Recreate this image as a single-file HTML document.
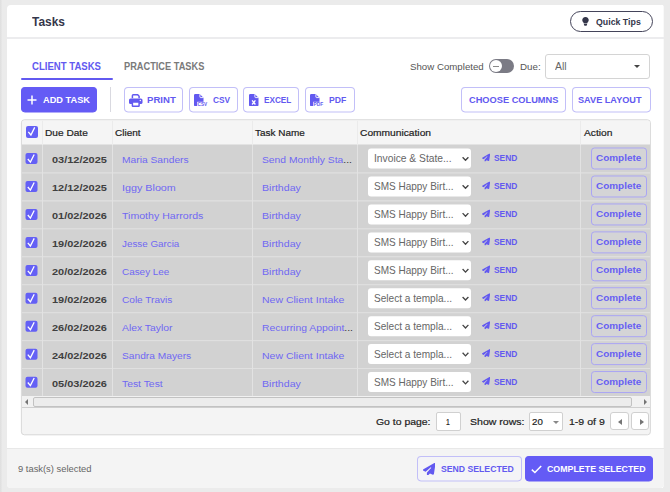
<!DOCTYPE html>
<html>
<head>
<meta charset="utf-8">
<title>Tasks</title>
<style>
*{box-sizing:border-box;margin:0;padding:0}
html,body{width:670px;height:492px;overflow:hidden}
body{background:#ebebeb;font-family:"Liberation Sans",sans-serif;position:relative;color:#333}
.abs{position:absolute;white-space:nowrap}
#edge{left:0;top:0;width:2px;height:492px;background:linear-gradient(90deg,#dedede,#e8e8e8)}
#card{left:7px;top:5px;width:656px;height:483px;background:#fff;border-radius:4px 0 0 4px}
#cardr{left:661px;top:0;transform:translate(.7px,4.800px);width:2px;height:482.800px;background:#fff;border-radius:0 3.500px 3.500px 0}
#hdrline{left:7px;top:37px;width:657px;height:2px;background:#ececee}
#title{left:32px;top:14px;font-size:12.5px;font-weight:bold;color:#34364a;line-height:16px;}
#qt{left:570px;top:11px;width:83px;height:21px;border:1px solid #44445a;border-radius:11px}
#qtt{left:595.5px;top:15px;font-size:9.8px;font-weight:bold;color:#34364a;line-height:13px;}
.tab{font-size:10.3px;font-weight:bold;line-height:12px;top:61px}
#tab1{left:32px;color:#6259f0;}
#tab2{left:124px;color:#7a7a7a;}
#tabline{left:21px;top:78px;width:91.500px;height:2px;background:#6259f0;border-radius:1px}
#showc{left:410px;top:61px;font-size:9.5px;color:#555;line-height:12px}
#toggle{left:488.500px;top:59px;width:25.500px;height:14px;border-radius:7px;background:#7b7b85}
#toggle i{position:absolute;left:1px;top:1px;width:12px;height:12px;border-radius:50%;background:#fff}
#toggle b{position:absolute;left:4px;top:6.500px;width:6px;height:1px;background:#8a8a8a}
#due{left:520px;top:61px;font-size:9.5px;color:#555;line-height:12px}
#sel{left:545px;top:54px;width:105px;height:25px;border:1px solid #d4d4d4;border-radius:3px;background:#fff}
#selt{left:555px;top:60px;font-size:10.6px;color:#666;line-height:12px}
#selc{left:634px;top:65px;width:0;height:0;border:3.5px solid transparent;border-top:3.5px solid #444;border-bottom:0}
.btn{height:25px;transform:scaleY(1.016);transform-origin:0 0;border:1px solid #c2bff8;border-radius:4px;background:#fff}
.btn.pri{background:#645bf5;border-color:#645bf5}
.bt{font-size:9.8px;font-weight:bold;color:#6259f0;line-height:12px;top:94px;}
.bt.w{color:#fff}
#vsep{left:110px;top:87px;width:1px;height:25px;background:#d9d9e0}

#grid{left:0;top:0;transform:translate(20.900px,119.300px);width:630px;height:315.900px;border:1.500px solid #d8d8d8;border-radius:3.500px;background:#f4f4f4}
#ghead{left:22px;top:0;transform:translateY(120.400px);width:627.600px;height:24.400px;background:#f5f5f5;border-radius:2px 2px 0 0}
.th{top:127.300px;font-size:9.7px;line-height:12px;color:#222;-webkit-text-stroke:.2px #222}
.rw{left:0;top:0;width:670px;height:27.930px}
.row{left:22px;top:0;width:627.600px;height:28px;background:#d2d2d2}
.rl{left:22px;top:-.4px;width:627.600px;height:1px;background:#e0e0e0}
.cb{width:12px;height:12px;background:#6460f5;border-radius:2px}
.cb.r{left:0;top:0;width:11.800px;height:11.300px}
.cb svg{position:absolute;left:0;top:0}
.vl{top:0;transform:translateY(120.800px);width:1px;height:275.200px;background:linear-gradient(#ebebeb 0,#ebebeb 23.800px,#e2e2e2 23.800px,#e2e2e2 100%)}
.td{top:0;font-size:9.6px;line-height:28px;margin-top:1.900px}
.lnk{color:#7068f2}
.lnk i{color:#333;font-style:normal}
.dt{color:#404040;font-weight:bold;font-size:9.7px;margin-top:2.200px}
.dd{left:368px;top:3.800px;width:103.200px;height:20.600px;background:#fff;border-radius:3px}
.ddt{top:5px;font-size:10.2px;line-height:20.500px;color:#666}
.send{top:-.45px;left:494px;font-size:8.800px;font-weight:bold;color:#6259f0;line-height:28px}
.cmp{left:591.300px;top:2.700px;width:55.400px;height:22.500px;border:1px solid #aaa5f4;border-radius:3.500px;background:#d4d4d6}
.cmpt{top:3.200px;font-size:9.4px;font-weight:bold;color:#675ff3;line-height:22px}
#hsb{left:22px;top:396px;width:627.600px;height:11px;background:#f1f1f1}
#hst{left:33px;top:397px;width:599px;height:10px;background:#ececec;border:1px solid #c2c2c2;border-radius:2px}
#pgline{left:22px;top:407px;width:627.600px;height:1px;background:#cfcfcf}
.pg{font-size:9.8px;line-height:12px;color:#222;top:416px;-webkit-text-stroke:.2px #222}
.pin{top:412px;height:19px;border:1px solid #d0d0d0;border-radius:2px;background:#fff}
#foot{left:7px;top:448px;width:657px;height:40px;background:#f4f4f4;border-radius:0 0 4px 4px;border-top:1px solid #e8e8e8}
#nsel{left:17.3px;top:462.5px;font-size:9.3px;color:#666;line-height:12px}
.pb{top:412px;height:18px;border:1px solid #d0d0d0;border-radius:3px;background:#fff}
</style>
</head>
<body>
<div id="edge" class="abs"></div>
<div id="card" class="abs"></div>
<div id="cardr" class="abs"></div>
<div id="hdrline" class="abs"></div>
<div id="title" class="abs" style="left:32.2px;transform:scaleX(0.954);transform-origin:0 50%;">Tasks</div>
<div id="qt" class="abs"></div>
<svg class="abs" style="left:582.400px;top:17.100px" width="7" height="8.8" viewBox="0 0 8 10"><path d="M4 0 C1.6 0 0.3 1.7 0.3 3.5 C0.3 4.8 1 5.5 1.6 6.2 C1.9 6.6 2 6.9 2 7.3 H6 C6 6.9 6.1 6.6 6.4 6.2 C7 5.5 7.7 4.8 7.7 3.5 C7.7 1.7 6.4 0 4 0 Z M2.2 7.9 H5.8 V8.6 C5.8 9.4 5.2 10 4 10 C2.8 10 2.2 9.4 2.2 8.6 Z" fill="#34364a"/></svg>
<div id="qtt" class="abs" style="left:595.7px;transform:scaleX(0.897);transform-origin:0 50%;">Quick Tips</div>

<div id="tab1" class="abs tab" style="left:31.8px;transform:scaleX(0.930);transform-origin:0 50%;">CLIENT TASKS</div>
<div id="tab2" class="abs tab" style="left:123.8px;transform:scaleX(0.896);transform-origin:0 50%;">PRACTICE TASKS</div>
<div id="tabline" class="abs"></div>
<div id="showc" class="abs" style="left:410.0px;transform:scaleX(1.019);transform-origin:0 50%;">Show Completed</div>
<div id="toggle" class="abs"><i></i><b></b></div>
<div id="due" class="abs" style="left:520.0px;transform:scaleX(1.026);transform-origin:0 50%;">Due:</div>
<div id="sel" class="abs"></div>
<div id="selt" class="abs" style="left:554.6px;transform:scaleX(0.985);transform-origin:0 50%;">All</div>
<div id="selc" class="abs"></div>

<div class="abs btn pri" style="left:21px;top:87px;width:76px"></div>
<svg class="abs" style="left:27px;top:95px" width="10" height="10" viewBox="0 0 10 10"><path d="M5 0.5 V9.5 M0.5 5 H9.5" stroke="#fff" stroke-width="1.5" fill="none"/></svg>
<div id="b1" class="abs bt w" style="left:42.9px;transform:scaleX(0.941);transform-origin:0 50%;">ADD TASK</div>
<div id="vsep" class="abs"></div>
<div class="abs btn" style="left:124px;top:87px;width:59px"></div>
<svg class="abs" style="left:129px;top:93.500px" width="13.5" height="13" viewBox="0 0 13.5 13"><path d="M3.4 4.3 V1.7 A0.9 0.9 0 0 1 4.3 0.8 H8.7 L10.1 2.2 V4.3" fill="none" stroke="#6259f0" stroke-width="1.5"/><rect x="0" y="4.4" width="13.5" height="5.6" rx="1.6" fill="#6259f0"/><rect x="3.4" y="8.1" width="6.7" height="4.1" rx="0.5" fill="#fff" stroke="#6259f0" stroke-width="1.5"/><circle cx="11.3" cy="6.5" r="0.7" fill="#fff"/></svg>
<div id="b2" class="abs bt" style="left:147.3px;transform:scaleX(0.978);transform-origin:0 50%;">PRINT</div>
<div class="abs btn" style="left:189px;top:87px;width:49px"></div>
<svg class="abs" style="left:194.400px;top:93.700px" width="14" height="12.5" viewBox="0 0 14 12.5"><path d="M1.3 0 H5.7 L9.5 3.8 V11 A1.3 1.3 0 0 1 8.2 12.3 H1.3 A1.3 1.3 0 0 1 0 11 V1.3 A1.3 1.3 0 0 1 1.3 0 Z" fill="#6259f0"/><path d="M5.9 0.2 V2.9 A0.7 0.7 0 0 0 6.6 3.6 H9.3" fill="none" stroke="#fff" stroke-width="0.9"/><rect x="3.2" y="7.8" width="11" height="5" fill="#fff"/><text x="3.6" y="12.2" font-family="Liberation Sans, sans-serif" font-weight="bold" font-size="5.4" fill="#6259f0" textLength="9.6" lengthAdjust="spacingAndGlyphs">CSV</text></svg>
<div id="b3" class="abs bt" style="left:213.0px;transform:scaleX(0.848);transform-origin:0 50%;">CSV</div>
<div class="abs btn" style="left:243px;top:87px;width:56px"></div>
<svg class="abs" style="left:249px;top:93.800px" width="9.5" height="12.3" viewBox="0 0 9.5 12.3"><path d="M1.3 0 H5.7 L9.5 3.8 V11 A1.3 1.3 0 0 1 8.2 12.3 H1.3 A1.3 1.3 0 0 1 0 11 V1.3 A1.3 1.3 0 0 1 1.3 0 Z" fill="#6259f0"/><path d="M5.9 0.2 V2.9 A0.7 0.7 0 0 0 6.6 3.6 H9.3" fill="none" stroke="#fff" stroke-width="0.9"/><path d="M3.1 6.3 L6.4 10.5 M6.4 6.3 L3.1 10.5" stroke="#fff" stroke-width="1.3" fill="none"/></svg>
<div id="b4" class="abs bt" style="left:264.1px;transform:scaleX(0.834);transform-origin:0 50%;">EXCEL</div>
<div class="abs btn" style="left:305px;top:87px;width:50px"></div>
<svg class="abs" style="left:310.200px;top:93.800px" width="14" height="12.5" viewBox="0 0 14 12.5"><path d="M1.3 0 H5.7 L9.5 3.8 V11 A1.3 1.3 0 0 1 8.2 12.3 H1.3 A1.3 1.3 0 0 1 0 11 V1.3 A1.3 1.3 0 0 1 1.3 0 Z" fill="#6259f0"/><path d="M5.9 0.2 V2.9 A0.7 0.7 0 0 0 6.6 3.6 H9.3" fill="none" stroke="#fff" stroke-width="0.9"/><rect x="3.2" y="7.8" width="11" height="5" fill="#fff"/><text x="3.6" y="12.1" font-family="Liberation Sans, sans-serif" font-weight="bold" font-size="5.2" fill="#6259f0" textLength="9.6" lengthAdjust="spacingAndGlyphs">PDF</text></svg>
<div id="b5" class="abs bt" style="left:329.4px;transform:scaleX(0.881);transform-origin:0 50%;">PDF</div>
<div class="abs btn" style="left:461px;top:87px;width:105px"></div>
<div id="b6" class="abs bt" style="left:469.2px;transform:scaleX(0.944);transform-origin:0 50%;">CHOOSE COLUMNS</div>
<div class="abs btn" style="left:572px;top:87px;width:79px"></div>
<div id="b7" class="abs bt" style="left:578.3px;transform:scaleX(0.934);transform-origin:0 50%;">SAVE LAYOUT</div>

<div id="grid" class="abs"></div>
<div id="ghead" class="abs"></div>
<span class="cb abs" style="left:26px;top:126px"><svg width="12" height="12" viewBox="0 0 12 12"><path d="M2.3 5.9 L4.9 9 L8.7 1.4" fill="none" stroke="#fff" stroke-width="1.3"/></svg></span>
<div id="h1" class="abs th" style="left:44.9px;transform:scaleX(1.045);transform-origin:0 50%;">Due Date</div>
<div id="h2" class="abs th" style="left:115.3px;transform:scaleX(1.030);transform-origin:0 50%;">Client</div>
<div id="h3" class="abs th" style="left:255.3px;transform:scaleX(1.027);transform-origin:0 50%;">Task Name</div>
<div id="h4" class="abs th" style="left:359.6px;transform:scaleX(1.055);transform-origin:0 50%;">Communication</div>
<div id="h5" class="abs th" style="left:583.5px;transform:scaleX(1.055);transform-origin:0 50%;">Action</div>
<div class="abs rw" style="transform:translateY(144.49px)">
<div class="abs row"></div>
<span class="cb r abs" style="transform:translate(25.500px,8.600px)"><svg width="12" height="12" viewBox="0 0 12 12"><path d="M2.3 5.9 L4.9 9 L8.7 1.4" fill="none" stroke="#fff" stroke-width="1.3"/></svg></span>
<div id="r0d" class="abs td dt" style="left:51.8px;transform:scaleX(1.132);transform-origin:0 50%;">03/12/2025</div>
<div id="r0c" class="abs td lnk" style="left:122.0px;transform:scaleX(1.068);transform-origin:0 50%;">Maria Sanders</div>
<div id="r0t" class="abs td lnk" style="left:262.0px;transform:scaleX(1.074);transform-origin:0 50%;">Send Monthly Sta<i>...</i></div>
<div class="abs dd"></div>
<div id="r0s" class="abs ddt" style="left:374.4px;transform:scaleX(1.007);transform-origin:0 50%;">Invoice &amp; State...</div>
<svg class="abs" style="left:461.800px;top:12px" width="7" height="5" viewBox="0 0 7 5"><path d="M0.6 0.7 L3.5 3.8 L6.4 0.7" fill="none" stroke="#444" stroke-width="1.3"/></svg>
<svg class="abs" style="left:482.1px;top:9.2px" width="8.2" height="8.2" viewBox="0 0 512 512"><path fill="#6259f0" d="M498.1 5.6c10.1 7 15.4 19.1 13.5 31.2l-64 416c-1.5 9.7-7.4 18.2-16 23s-18.9 5.4-28 1.6L284 427.7l-68.5 74.1c-8.9 9.7-22.9 12.9-35.2 8.1S160 493.2 160 480V396.4c0-4 1.5-7.8 4.2-10.7L331.8 202.8c5.8-6.3 5.6-16-.4-22s-15.7-6.4-22-.7L106 360.8 17.7 316.6C7.1 311.3 .3 300.7 0 288.900s5.9-22.8 16.1-28.700l448-256c10.7-6.1 23.9-5.5 34 1.400z"/></svg>
<div id="r0n" class="abs send" style="left:493.5px;transform:scaleX(0.956);transform-origin:0 50%;">SEND</div>
<div class="abs cmp"></div>
<div id="r0k" class="abs cmpt" style="left:596.2px;transform:scaleX(1.060);transform-origin:0 50%;">Complete</div>
</div>
<div class="abs rw" style="transform:translateY(172.49px)">
<div class="abs row"></div>
<span class="cb r abs" style="transform:translate(25.500px,8.600px)"><svg width="12" height="12" viewBox="0 0 12 12"><path d="M2.3 5.9 L4.9 9 L8.7 1.4" fill="none" stroke="#fff" stroke-width="1.3"/></svg></span>
<div id="r1d" class="abs td dt" style="left:51.8px;transform:scaleX(1.132);transform-origin:0 50%;">12/12/2025</div>
<div id="r1c" class="abs td lnk" style="left:122.0px;transform:scaleX(1.121);transform-origin:0 50%;">Iggy Bloom</div>
<div id="r1t" class="abs td lnk" style="left:262.0px;transform:scaleX(1.103);transform-origin:0 50%;">Birthday</div>
<div class="abs dd"></div>
<div id="r1s" class="abs ddt" style="left:374.4px;transform:scaleX(0.982);transform-origin:0 50%;">SMS Happy Birt...</div>
<svg class="abs" style="left:461.800px;top:12px" width="7" height="5" viewBox="0 0 7 5"><path d="M0.6 0.7 L3.5 3.8 L6.4 0.7" fill="none" stroke="#444" stroke-width="1.3"/></svg>
<svg class="abs" style="left:482.1px;top:9.2px" width="8.2" height="8.2" viewBox="0 0 512 512"><path fill="#6259f0" d="M498.1 5.6c10.1 7 15.4 19.1 13.5 31.2l-64 416c-1.5 9.7-7.4 18.2-16 23s-18.9 5.4-28 1.6L284 427.7l-68.5 74.1c-8.9 9.7-22.9 12.9-35.2 8.1S160 493.2 160 480V396.4c0-4 1.5-7.8 4.2-10.7L331.8 202.8c5.8-6.3 5.6-16-.4-22s-15.7-6.4-22-.7L106 360.8 17.7 316.6C7.1 311.3 .3 300.7 0 288.900s5.9-22.8 16.1-28.700l448-256c10.7-6.1 23.9-5.5 34 1.400z"/></svg>
<div id="r1n" class="abs send" style="left:493.5px;transform:scaleX(0.956);transform-origin:0 50%;">SEND</div>
<div class="abs cmp"></div>
<div id="r1k" class="abs cmpt" style="left:596.2px;transform:scaleX(1.060);transform-origin:0 50%;">Complete</div>
</div>
<div class="abs rw" style="transform:translateY(200.46px)">
<div class="abs row"></div>
<span class="cb r abs" style="transform:translate(25.500px,8.600px)"><svg width="12" height="12" viewBox="0 0 12 12"><path d="M2.3 5.9 L4.9 9 L8.7 1.4" fill="none" stroke="#fff" stroke-width="1.3"/></svg></span>
<div id="r2d" class="abs td dt" style="left:51.8px;transform:scaleX(1.132);transform-origin:0 50%;">01/02/2026</div>
<div id="r2c" class="abs td lnk" style="left:122.0px;transform:scaleX(1.103);transform-origin:0 50%;">Timothy Harrords</div>
<div id="r2t" class="abs td lnk" style="left:262.0px;transform:scaleX(1.103);transform-origin:0 50%;">Birthday</div>
<div class="abs dd"></div>
<div id="r2s" class="abs ddt" style="left:374.4px;transform:scaleX(0.982);transform-origin:0 50%;">SMS Happy Birt...</div>
<svg class="abs" style="left:461.800px;top:12px" width="7" height="5" viewBox="0 0 7 5"><path d="M0.6 0.7 L3.5 3.8 L6.4 0.7" fill="none" stroke="#444" stroke-width="1.3"/></svg>
<svg class="abs" style="left:482.1px;top:9.2px" width="8.2" height="8.2" viewBox="0 0 512 512"><path fill="#6259f0" d="M498.1 5.6c10.1 7 15.4 19.1 13.5 31.2l-64 416c-1.5 9.7-7.4 18.2-16 23s-18.9 5.4-28 1.6L284 427.7l-68.5 74.1c-8.9 9.7-22.9 12.9-35.2 8.1S160 493.2 160 480V396.4c0-4 1.5-7.8 4.2-10.7L331.8 202.8c5.8-6.3 5.6-16-.4-22s-15.7-6.4-22-.7L106 360.8 17.7 316.6C7.1 311.3 .3 300.7 0 288.900s5.9-22.8 16.1-28.700l448-256c10.7-6.1 23.9-5.5 34 1.400z"/></svg>
<div id="r2n" class="abs send" style="left:493.5px;transform:scaleX(0.956);transform-origin:0 50%;">SEND</div>
<div class="abs cmp"></div>
<div id="r2k" class="abs cmpt" style="left:596.2px;transform:scaleX(1.060);transform-origin:0 50%;">Complete</div>
</div>
<div class="abs rw" style="transform:translateY(228.39px)">
<div class="abs row"></div>
<span class="cb r abs" style="transform:translate(25.500px,8.600px)"><svg width="12" height="12" viewBox="0 0 12 12"><path d="M2.3 5.9 L4.9 9 L8.7 1.4" fill="none" stroke="#fff" stroke-width="1.3"/></svg></span>
<div id="r3d" class="abs td dt" style="left:51.8px;transform:scaleX(1.132);transform-origin:0 50%;">19/02/2026</div>
<div id="r3c" class="abs td lnk" style="left:122.0px;transform:scaleX(1.024);transform-origin:0 50%;">Jesse Garcia</div>
<div id="r3t" class="abs td lnk" style="left:262.0px;transform:scaleX(1.103);transform-origin:0 50%;">Birthday</div>
<div class="abs dd"></div>
<div id="r3s" class="abs ddt" style="left:374.4px;transform:scaleX(0.982);transform-origin:0 50%;">SMS Happy Birt...</div>
<svg class="abs" style="left:461.800px;top:12px" width="7" height="5" viewBox="0 0 7 5"><path d="M0.6 0.7 L3.5 3.8 L6.4 0.7" fill="none" stroke="#444" stroke-width="1.3"/></svg>
<svg class="abs" style="left:482.1px;top:9.2px" width="8.2" height="8.2" viewBox="0 0 512 512"><path fill="#6259f0" d="M498.1 5.6c10.1 7 15.4 19.1 13.5 31.2l-64 416c-1.5 9.7-7.4 18.2-16 23s-18.9 5.4-28 1.6L284 427.7l-68.5 74.1c-8.9 9.7-22.9 12.9-35.2 8.1S160 493.2 160 480V396.4c0-4 1.5-7.8 4.2-10.7L331.8 202.8c5.8-6.3 5.6-16-.4-22s-15.7-6.4-22-.7L106 360.8 17.7 316.6C7.1 311.3 .3 300.7 0 288.900s5.9-22.8 16.1-28.700l448-256c10.7-6.1 23.9-5.5 34 1.400z"/></svg>
<div id="r3n" class="abs send" style="left:493.5px;transform:scaleX(0.956);transform-origin:0 50%;">SEND</div>
<div class="abs cmp"></div>
<div id="r3k" class="abs cmpt" style="left:596.2px;transform:scaleX(1.060);transform-origin:0 50%;">Complete</div>
</div>
<div class="abs rw" style="transform:translateY(256.32px)">
<div class="abs row"></div>
<span class="cb r abs" style="transform:translate(25.500px,8.600px)"><svg width="12" height="12" viewBox="0 0 12 12"><path d="M2.3 5.9 L4.9 9 L8.7 1.4" fill="none" stroke="#fff" stroke-width="1.3"/></svg></span>
<div id="r4d" class="abs td dt" style="left:51.8px;transform:scaleX(1.132);transform-origin:0 50%;">20/02/2026</div>
<div id="r4c" class="abs td lnk" style="left:122.0px;transform:scaleX(1.033);transform-origin:0 50%;">Casey Lee</div>
<div id="r4t" class="abs td lnk" style="left:262.0px;transform:scaleX(1.103);transform-origin:0 50%;">Birthday</div>
<div class="abs dd"></div>
<div id="r4s" class="abs ddt" style="left:374.4px;transform:scaleX(0.982);transform-origin:0 50%;">SMS Happy Birt...</div>
<svg class="abs" style="left:461.800px;top:12px" width="7" height="5" viewBox="0 0 7 5"><path d="M0.6 0.7 L3.5 3.8 L6.4 0.7" fill="none" stroke="#444" stroke-width="1.3"/></svg>
<svg class="abs" style="left:482.1px;top:9.2px" width="8.2" height="8.2" viewBox="0 0 512 512"><path fill="#6259f0" d="M498.1 5.6c10.1 7 15.4 19.1 13.5 31.2l-64 416c-1.5 9.7-7.4 18.2-16 23s-18.9 5.4-28 1.6L284 427.7l-68.5 74.1c-8.9 9.7-22.9 12.9-35.2 8.1S160 493.2 160 480V396.4c0-4 1.5-7.8 4.2-10.7L331.8 202.8c5.8-6.3 5.6-16-.4-22s-15.7-6.4-22-.7L106 360.8 17.7 316.6C7.1 311.3 .3 300.7 0 288.900s5.9-22.8 16.1-28.700l448-256c10.7-6.1 23.9-5.5 34 1.400z"/></svg>
<div id="r4n" class="abs send" style="left:493.5px;transform:scaleX(0.956);transform-origin:0 50%;">SEND</div>
<div class="abs cmp"></div>
<div id="r4k" class="abs cmpt" style="left:596.2px;transform:scaleX(1.060);transform-origin:0 50%;">Complete</div>
</div>
<div class="abs rw" style="transform:translateY(284.25px)">
<div class="abs row"></div>
<span class="cb r abs" style="transform:translate(25.500px,8.600px)"><svg width="12" height="12" viewBox="0 0 12 12"><path d="M2.3 5.9 L4.9 9 L8.7 1.4" fill="none" stroke="#fff" stroke-width="1.3"/></svg></span>
<div id="r5d" class="abs td dt" style="left:51.8px;transform:scaleX(1.132);transform-origin:0 50%;">19/02/2026</div>
<div id="r5c" class="abs td lnk" style="left:122.0px;transform:scaleX(1.050);transform-origin:0 50%;">Cole Travis</div>
<div id="r5t" class="abs td lnk" style="left:262.0px;transform:scaleX(1.095);transform-origin:0 50%;">New Client Intake</div>
<div class="abs dd"></div>
<div id="r5s" class="abs ddt" style="left:374.4px;transform:scaleX(0.991);transform-origin:0 50%;">Select a templa...</div>
<svg class="abs" style="left:461.800px;top:12px" width="7" height="5" viewBox="0 0 7 5"><path d="M0.6 0.7 L3.5 3.8 L6.4 0.7" fill="none" stroke="#444" stroke-width="1.3"/></svg>
<svg class="abs" style="left:482.1px;top:9.2px" width="8.2" height="8.2" viewBox="0 0 512 512"><path fill="#6259f0" d="M498.1 5.6c10.1 7 15.4 19.1 13.5 31.2l-64 416c-1.5 9.7-7.4 18.2-16 23s-18.9 5.4-28 1.6L284 427.7l-68.5 74.1c-8.9 9.7-22.9 12.9-35.2 8.1S160 493.2 160 480V396.4c0-4 1.5-7.8 4.2-10.7L331.8 202.8c5.8-6.3 5.6-16-.4-22s-15.7-6.4-22-.7L106 360.8 17.7 316.6C7.1 311.3 .3 300.7 0 288.900s5.9-22.8 16.1-28.700l448-256c10.7-6.1 23.9-5.5 34 1.400z"/></svg>
<div id="r5n" class="abs send" style="left:493.5px;transform:scaleX(0.956);transform-origin:0 50%;">SEND</div>
<div class="abs cmp"></div>
<div id="r5k" class="abs cmpt" style="left:596.2px;transform:scaleX(1.060);transform-origin:0 50%;">Complete</div>
</div>
<div class="abs rw" style="transform:translateY(312.18px)">
<div class="abs row"></div>
<span class="cb r abs" style="transform:translate(25.500px,8.600px)"><svg width="12" height="12" viewBox="0 0 12 12"><path d="M2.3 5.9 L4.9 9 L8.7 1.4" fill="none" stroke="#fff" stroke-width="1.3"/></svg></span>
<div id="r6d" class="abs td dt" style="left:51.8px;transform:scaleX(1.132);transform-origin:0 50%;">26/02/2026</div>
<div id="r6c" class="abs td lnk" style="left:122.0px;transform:scaleX(1.078);transform-origin:0 50%;">Alex Taylor</div>
<div id="r6t" class="abs td lnk" style="left:262.0px;transform:scaleX(1.080);transform-origin:0 50%;">Recurring Appoint<i>...</i></div>
<div class="abs dd"></div>
<div id="r6s" class="abs ddt" style="left:374.4px;transform:scaleX(0.991);transform-origin:0 50%;">Select a templa...</div>
<svg class="abs" style="left:461.800px;top:12px" width="7" height="5" viewBox="0 0 7 5"><path d="M0.6 0.7 L3.5 3.8 L6.4 0.7" fill="none" stroke="#444" stroke-width="1.3"/></svg>
<svg class="abs" style="left:482.1px;top:9.2px" width="8.2" height="8.2" viewBox="0 0 512 512"><path fill="#6259f0" d="M498.1 5.6c10.1 7 15.4 19.1 13.5 31.2l-64 416c-1.5 9.7-7.4 18.2-16 23s-18.9 5.4-28 1.6L284 427.7l-68.5 74.1c-8.9 9.7-22.9 12.9-35.2 8.1S160 493.2 160 480V396.4c0-4 1.5-7.8 4.2-10.7L331.8 202.8c5.8-6.3 5.6-16-.4-22s-15.7-6.4-22-.7L106 360.8 17.7 316.6C7.1 311.3 .3 300.7 0 288.900s5.9-22.8 16.1-28.700l448-256c10.7-6.1 23.9-5.5 34 1.400z"/></svg>
<div id="r6n" class="abs send" style="left:493.5px;transform:scaleX(0.956);transform-origin:0 50%;">SEND</div>
<div class="abs cmp"></div>
<div id="r6k" class="abs cmpt" style="left:596.2px;transform:scaleX(1.060);transform-origin:0 50%;">Complete</div>
</div>
<div class="abs rw" style="transform:translateY(340.11px)">
<div class="abs row"></div>
<span class="cb r abs" style="transform:translate(25.500px,8.600px)"><svg width="12" height="12" viewBox="0 0 12 12"><path d="M2.3 5.9 L4.9 9 L8.7 1.4" fill="none" stroke="#fff" stroke-width="1.3"/></svg></span>
<div id="r7d" class="abs td dt" style="left:51.8px;transform:scaleX(1.132);transform-origin:0 50%;">24/02/2026</div>
<div id="r7c" class="abs td lnk" style="left:122.0px;transform:scaleX(1.063);transform-origin:0 50%;">Sandra Mayers</div>
<div id="r7t" class="abs td lnk" style="left:262.0px;transform:scaleX(1.095);transform-origin:0 50%;">New Client Intake</div>
<div class="abs dd"></div>
<div id="r7s" class="abs ddt" style="left:374.4px;transform:scaleX(0.991);transform-origin:0 50%;">Select a templa...</div>
<svg class="abs" style="left:461.800px;top:12px" width="7" height="5" viewBox="0 0 7 5"><path d="M0.6 0.7 L3.5 3.8 L6.4 0.7" fill="none" stroke="#444" stroke-width="1.3"/></svg>
<svg class="abs" style="left:482.1px;top:9.2px" width="8.2" height="8.2" viewBox="0 0 512 512"><path fill="#6259f0" d="M498.1 5.6c10.1 7 15.4 19.1 13.5 31.2l-64 416c-1.5 9.7-7.4 18.2-16 23s-18.9 5.4-28 1.6L284 427.7l-68.5 74.1c-8.9 9.7-22.9 12.9-35.2 8.1S160 493.2 160 480V396.4c0-4 1.5-7.8 4.2-10.7L331.8 202.8c5.8-6.3 5.6-16-.4-22s-15.7-6.4-22-.7L106 360.8 17.7 316.6C7.1 311.3 .3 300.7 0 288.900s5.9-22.8 16.1-28.700l448-256c10.7-6.1 23.9-5.5 34 1.400z"/></svg>
<div id="r7n" class="abs send" style="left:493.5px;transform:scaleX(0.956);transform-origin:0 50%;">SEND</div>
<div class="abs cmp"></div>
<div id="r7k" class="abs cmpt" style="left:596.2px;transform:scaleX(1.060);transform-origin:0 50%;">Complete</div>
</div>
<div class="abs rw" style="transform:translateY(368.04px)">
<div class="abs row"></div>
<span class="cb r abs" style="transform:translate(25.500px,8.600px)"><svg width="12" height="12" viewBox="0 0 12 12"><path d="M2.3 5.9 L4.9 9 L8.7 1.4" fill="none" stroke="#fff" stroke-width="1.3"/></svg></span>
<div id="r8d" class="abs td dt" style="left:51.8px;transform:scaleX(1.132);transform-origin:0 50%;">05/03/2026</div>
<div id="r8c" class="abs td lnk" style="left:122.0px;transform:scaleX(1.080);transform-origin:0 50%;">Test Test</div>
<div id="r8t" class="abs td lnk" style="left:262.0px;transform:scaleX(1.103);transform-origin:0 50%;">Birthday</div>
<div class="abs dd"></div>
<div id="r8s" class="abs ddt" style="left:374.4px;transform:scaleX(0.982);transform-origin:0 50%;">SMS Happy Birt...</div>
<svg class="abs" style="left:461.800px;top:12px" width="7" height="5" viewBox="0 0 7 5"><path d="M0.6 0.7 L3.5 3.8 L6.4 0.7" fill="none" stroke="#444" stroke-width="1.3"/></svg>
<svg class="abs" style="left:482.1px;top:9.2px" width="8.2" height="8.2" viewBox="0 0 512 512"><path fill="#6259f0" d="M498.1 5.6c10.1 7 15.4 19.1 13.5 31.2l-64 416c-1.5 9.7-7.4 18.2-16 23s-18.9 5.4-28 1.6L284 427.7l-68.5 74.1c-8.9 9.7-22.9 12.9-35.2 8.1S160 493.2 160 480V396.4c0-4 1.5-7.8 4.2-10.7L331.8 202.8c5.8-6.3 5.6-16-.4-22s-15.7-6.4-22-.7L106 360.8 17.7 316.6C7.1 311.3 .3 300.7 0 288.900s5.9-22.8 16.1-28.700l448-256c10.7-6.1 23.9-5.5 34 1.400z"/></svg>
<div id="r8n" class="abs send" style="left:493.5px;transform:scaleX(0.956);transform-origin:0 50%;">SEND</div>
<div class="abs cmp"></div>
<div id="r8k" class="abs cmpt" style="left:596.2px;transform:scaleX(1.060);transform-origin:0 50%;">Complete</div>
</div>
<div class="abs rl" style="transform:translateY(172.53px)"></div>
<div class="abs rl" style="transform:translateY(200.46px)"></div>
<div class="abs rl" style="transform:translateY(228.39px)"></div>
<div class="abs rl" style="transform:translateY(256.32px)"></div>
<div class="abs rl" style="transform:translateY(284.25px)"></div>
<div class="abs rl" style="transform:translateY(312.18px)"></div>
<div class="abs rl" style="transform:translateY(340.11px)"></div>
<div class="abs rl" style="transform:translateY(368.04px)"></div>
<div class="abs vl" style="left:42px"></div>
<div class="abs vl" style="left:112px"></div>
<div class="abs vl" style="left:252px"></div>
<div class="abs vl" style="left:357px"></div>
<div class="abs vl" style="left:580px"></div>
<div id="hsb" class="abs"></div>
<div id="hst" class="abs"></div>
<div id="pgline" class="abs"></div>
<div id="p1" class="abs pg" style="left:375.6px;transform:scaleX(1.064);transform-origin:0 50%;">Go to page:</div>
<div class="abs pin" style="left:436px;width:25px"></div>
<div id="p2" class="abs pg" style="left:445.9px;transform:scaleX(0.697);transform-origin:0 50%;">1</div>
<div id="p3" class="abs pg" style="left:469.7px;transform:scaleX(1.076);transform-origin:0 50%;">Show rows:</div>
<div class="abs pin" style="left:529px;width:34px"></div>
<div id="p4" class="abs pg" style="left:532.2px;transform:scaleX(0.988);transform-origin:0 50%;">20</div>
<div id="p5" class="abs pg" style="left:568.7px;transform:scaleX(1.076);transform-origin:0 50%;">1-9 of 9</div>
<div class="abs pb" style="left:610px;width:18.500px"></div>
<div class="abs pb" style="left:631px;width:18px"></div>

<div class="abs" style="left:553.400px;top:421.200px;width:0;height:0;border:3.300px solid transparent;border-top:3.300px solid #888;border-bottom:0"></div>
<div class="abs" style="left:618px;top:418.500px;width:0;height:0;border:3.300px solid transparent;border-right:4px solid #757575;border-left:0"></div>
<div class="abs" style="left:639.700px;top:418.500px;width:0;height:0;border:3.300px solid transparent;border-left:4px solid #757575;border-right:0"></div>
<div class="abs" style="left:25.100px;top:398.800px;width:0;height:0;border:3.200px solid transparent;border-right:3.900px solid #757575;border-left:0"></div>
<div class="abs" style="left:644.100px;top:398.800px;width:0;height:0;border:3.200px solid transparent;border-left:3.900px solid #757575;border-right:0"></div>

<div id="foot" class="abs"></div>
<div id="nsel" class="abs" style="left:17.5px;transform:scaleX(1.008);transform-origin:0 50%;">9 task(s) selected</div>
<div class="abs btn" style="left:417px;top:456px;width:105px;background:#f4f4f7"></div>
<svg class="abs" style="left:422.5px;top:462.5px" width="12.5" height="12.5" viewBox="0 0 512 512"><path fill="#6259f0" d="M498.1 5.6c10.1 7 15.4 19.1 13.5 31.2l-64 416c-1.5 9.7-7.4 18.2-16 23s-18.9 5.4-28 1.6L284 427.7l-68.5 74.1c-8.9 9.7-22.9 12.9-35.2 8.1S160 493.2 160 480V396.4c0-4 1.5-7.8 4.2-10.7L331.8 202.8c5.8-6.3 5.6-16-.4-22s-15.7-6.4-22-.7L106 360.8 17.7 316.6C7.1 311.3 .3 300.7 0 288.900s5.9-22.8 16.1-28.700l448-256c10.7-6.1 23.9-5.5 34 1.400z"/></svg>
<div id="b8" class="abs bt" style="left:440.5px;transform:scaleX(0.885);transform-origin:0 50%;top:463px">SEND SELECTED</div>
<div class="abs btn pri" style="left:525px;top:456px;width:128.300px"></div>
<svg class="abs" style="left:531px;top:465px" width="11" height="8.5" viewBox="0 0 11 8.5"><path d="M0.8 4.6 L3.9 7.5 L10.2 0.9" fill="none" stroke="#fff" stroke-width="1.5"/></svg>
<div id="b9" class="abs bt w" style="left:546.8px;transform:scaleX(0.901);transform-origin:0 50%;top:463px">COMPLETE SELECTED</div>
</body>
</html>
